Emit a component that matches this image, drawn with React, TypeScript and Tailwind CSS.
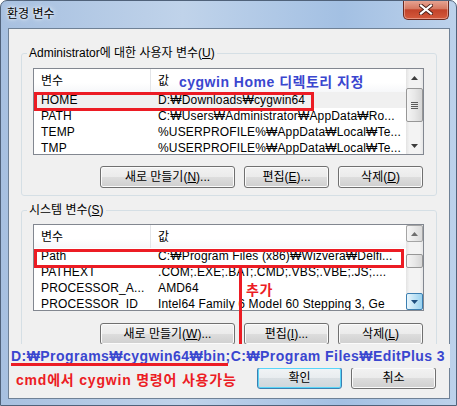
import React from "react";

type Row = [string, string];

function Arrow({ dir, color }: { dir: "up" | "down"; color: string }) {
  return (
    <svg width="7" height="4" viewBox="0 0 7 4">
      {dir === "up" ? (
        <path d="M3.5 0L7 4H0Z" fill={color} />
      ) : (
        <path d="M0 0H7L3.5 4Z" fill={color} />
      )}
    </svg>
  );
}

function ArrowBtn({ dir, look }: { dir: "up" | "down"; look: "plain" | "border" | "hot" }) {
  if (look === "plain") {
    return (
      <div className="w-[17px] h-[17px] flex items-center justify-center">
        <Arrow dir={dir} color="#3c3c3c" />
      </div>
    );
  }
  if (look === "hot") {
    return (
      <div className="w-[17px] h-[17px] flex items-center justify-center rounded-[2px] border border-[#3c7fb1] bg-[linear-gradient(to_right,#e8f6fd,#c4e5f6_45%,#98d1ef)]">
        <Arrow dir={dir} color="#1e4f80" />
      </div>
    );
  }
  return (
    <div className="w-[17px] h-[17px] flex items-center justify-center rounded-[2px] border border-[#a5a5a5] bg-[linear-gradient(to_right,#f6f6f6,#e9e9e9_50%,#dadada)]">
      <Arrow dir={dir} color="#6e6e6e" />
    </div>
  );
}

function ScrollBar({ upLook, downLook, thumbClass, grip }: { upLook: "plain" | "border"; downLook: "plain" | "hot"; thumbClass: string; grip: boolean }) {
  return (
    <div className="w-[17px] h-full flex flex-col bg-[linear-gradient(to_right,#e3e3e3,#f3f3f3_20%,#f3f3f3_80%,#e6e6e6)]">
      <ArrowBtn dir="up" look={upLook} />
      <div className={`w-[17px] flex flex-col items-center justify-center rounded-[2px] border border-[#979797] bg-[linear-gradient(to_right,#f4f4f4,#e8e8e8_50%,#d6d6d6)] ${thumbClass}`}>
        {grip && (
          <div className="flex flex-col gap-[1px]">
            <div className="w-[7px] h-px bg-[#5c5c5c]" />
            <div className="w-[7px] h-px bg-[#5c5c5c]" />
            <div className="w-[7px] h-px bg-[#5c5c5c]" />
            <div className="w-[7px] h-px bg-[#5c5c5c]" />
          </div>
        )}
      </div>
      <div className="flex-1" />
      <ArrowBtn dir="down" look={downLook} />
    </div>
  );
}

function VarList({ rows, selected, children }: { rows: Row[]; selected: number; children: React.ReactNode }) {
  return (
    <div className="w-[391px] h-[87px] border border-[#828790] bg-white flex overflow-hidden">
      <div className="flex-1 flex flex-col overflow-hidden">
        <div className="h-[23px] flex shrink-0 bg-[linear-gradient(to_bottom,#ffffff,#ffffff_60%,#f6f7f9)]">
          <div className="w-[117px] pl-[7px] flex items-center border-r border-[#e3e5e8]">변수</div>
          <div className="flex-1 pl-[7px] flex items-center">값</div>
        </div>
        {rows.map(([name, value], i) => (
          <div key={name} className={`h-[16px] shrink-0 flex items-center whitespace-nowrap tracking-[0.15px] ${i === selected ? "bg-[#f0f0f0]" : ""}`}>
            <div className="w-[117px] pl-[7px] overflow-hidden">{name}</div>
            <div className="flex-1 pl-[7px] overflow-hidden">{value}</div>
          </div>
        ))}
      </div>
      {children}
    </div>
  );
}

function Btn({ children, w, primary }: { children: React.ReactNode; w: string; primary?: boolean }) {
  return (
    <button
      className={`${w} h-[22px] rounded-[3px] border text-[12px] leading-[14px] text-black flex items-center justify-center ${
        primary
          ? "border-[#3c7fb1] shadow-[inset_0_0_0_1px_#5ad6f8] bg-[linear-gradient(to_bottom,#f1f4f6,#e8ecef_50%,#d9dfe3_51%,#cfd6db)]"
          : "border-[#707070] shadow-[inset_0_0_0_1px_#fbfbfb] bg-[linear-gradient(to_bottom,#f2f2f2,#ebebeb_50%,#dddddd_51%,#cfcfcf)]"
      }`}
    >
      {children}
    </button>
  );
}

function Key({ k }: { k: string }) {
  return (
    <>
      (<span className="underline underline-offset-[1px]">{k}</span>)
    </>
  );
}

const userRows: Row[] = [
  ["HOME", "D:₩Downloads₩cygwin64"],
  ["PATH", "C:₩Users₩Administrator₩AppData₩Ro..."],
  ["TEMP", "%USERPROFILE%₩AppData₩Local₩Te..."],
  ["TMP", "%USERPROFILE%₩AppData₩Local₩Te..."],
];

const sysRows: Row[] = [
  ["Path", "C:₩Program Files (x86)₩Wizvera₩Delfi..."],
  ["PATHEXT", ".COM;.EXE;.BAT;.CMD;.VBS;.VBE;.JS;...."],
  ["PROCESSOR_A...", "AMD64"],
  ["PROCESSOR_ID", "Intel64 Family 6 Model 60 Stepping 3, Ge"],
];

export default function App() {
  return (
    <div className="relative w-[457px] h-[406px] overflow-hidden rounded-t-[7px] border border-[#50627a] bg-[linear-gradient(to_right,#a7c0e0,#c0d3ea_40%,#a3c0e3_75%,#bdd2eb)] text-[12px] leading-[14px] text-black font-['Liberation_Sans','Noto_Sans_CJK_KR',sans-serif]">
      {/* title bar */}
      <div className="h-[27px] flex items-start justify-between pl-[6px] pr-[7px]">
        <span className="mt-[6px] [text-shadow:0_0_6px_#ffffff,0_0_3px_#ffffff]">환경 변수</span>
        <div className="-mt-px w-[46px] h-[20px] rounded-b-[5px] border border-t-0 border-[#6a2a20] flex items-center justify-center shadow-[inset_0_0_0_1px_rgba(255,220,210,0.45)] bg-[linear-gradient(to_bottom,#e8a897,#d67a63_45%,#c2432a_52%,#d45a3c)]">
          <svg width="14" height="11" viewBox="0 0 14 11">
            <path d="M2 1.5L12 9.5M12 1.5L2 9.5" stroke="#4a1f18" strokeWidth="4" strokeLinecap="square" />
            <path d="M2 1.5L12 9.5M12 1.5L2 9.5" stroke="#ffffff" strokeWidth="2.2" strokeLinecap="square" />
          </svg>
        </div>
      </div>

      {/* client area */}
      <div className="ml-[7px] mr-[6px] h-[371px] border border-[#6f8196] bg-[#f0f0f0] flex flex-col">
        <fieldset className="ml-[12px] mt-[17px] w-[416px] border border-[#d5dfe5] rounded-[3px]">
          <legend className="ml-[5px] px-[2px] leading-[14px]">
            Administrator에 대한 사용자 변수<Key k="U" />
          </legend>
          <div className="pl-[11px] pr-[12px] pb-[7px] flex flex-col">
            <div className="mt-[8px]">
              <VarList rows={userRows} selected={0}>
                <ScrollBar upLook="plain" downLook="plain" thumbClass="mt-[2px] h-[34px]" grip />
              </VarList>
            </div>
            <div className="mt-[11px] mr-px flex justify-end gap-[9px]">
              <Btn w="w-[135px]">새로 만들기<Key k="N" />...</Btn>
              <Btn w="w-[85px]">편집<Key k="E" />...</Btn>
              <Btn w="w-[85px]">삭제<Key k="D" /></Btn>
            </div>
          </div>
        </fieldset>

        <fieldset className="ml-[12px] mt-[7px] w-[416px] border border-[#d5dfe5] rounded-[3px]">
          <legend className="ml-[5px] px-[2px] leading-[14px]">
            시스템 변수<Key k="S" />
          </legend>
          <div className="pl-[11px] pr-[12px] pb-[7px] flex flex-col">
            <div className="mt-[7px]">
              <VarList rows={sysRows} selected={-1}>
                <ScrollBar upLook="border" downLook="hot" thumbClass="mt-[12px] h-[14px]" grip={false} />
              </VarList>
            </div>
            <div className="mt-[12px] mr-px flex justify-end gap-[9px]">
              <Btn w="w-[135px]">새로 만들기<Key k="W" />...</Btn>
              <Btn w="w-[85px]">편집<Key k="I" />...</Btn>
              <Btn w="w-[85px]">삭제<Key k="L" /></Btn>
            </div>
          </div>
        </fieldset>

        <div className="mt-[14px] mr-[13px] flex justify-end gap-[9px]">
          <Btn w="w-[85px]" primary>확인</Btn>
          <Btn w="w-[85px]">취소</Btn>
        </div>
      </div>

      {/* annotations */}
      <div className="absolute left-[33px] top-[91px] w-[280px] h-[19px] border-[3px] border-[#ec1c24]" />
      <div className="absolute left-[178px] top-[73px] text-[14px] leading-[16px] font-bold tracking-[0.5px] text-[#3a46cf] whitespace-nowrap">
        cygwin Home 디렉토리 지정
      </div>
      <div className="absolute left-[33px] top-[248px] w-[370px] h-[19px] border-[3px] border-[#ec1c24]" />
      <div className="absolute left-[238px] top-[266px] w-[3px] h-[77px] bg-[#ec1c24]" />
      <div className="absolute left-[245px] top-[281px] text-[14px] leading-[16px] font-bold tracking-[0.5px] text-[#ec1c24]">추가</div>
      <div className="absolute left-[9px] top-[343px] w-[440px] h-[24px] bg-[#f0f0f0] flex items-center pl-[1px] text-[14px] leading-[16px] font-bold tracking-[0.45px] text-[#3a46cf] whitespace-nowrap">
        D:₩Programs₩cygwin64₩bin;C:₩Program Files₩EditPlus 3
      </div>
      <div className="absolute left-[10px] top-[362px] w-[217px] h-[3px] bg-[#ec1c24]" />
      <div className="absolute left-[15px] top-[371px] text-[14px] leading-[16px] font-bold tracking-[0.8px] text-[#ec1c24] whitespace-nowrap">
        cmd에서 cygwin 명령어 사용가능
      </div>
    </div>
  );
}
